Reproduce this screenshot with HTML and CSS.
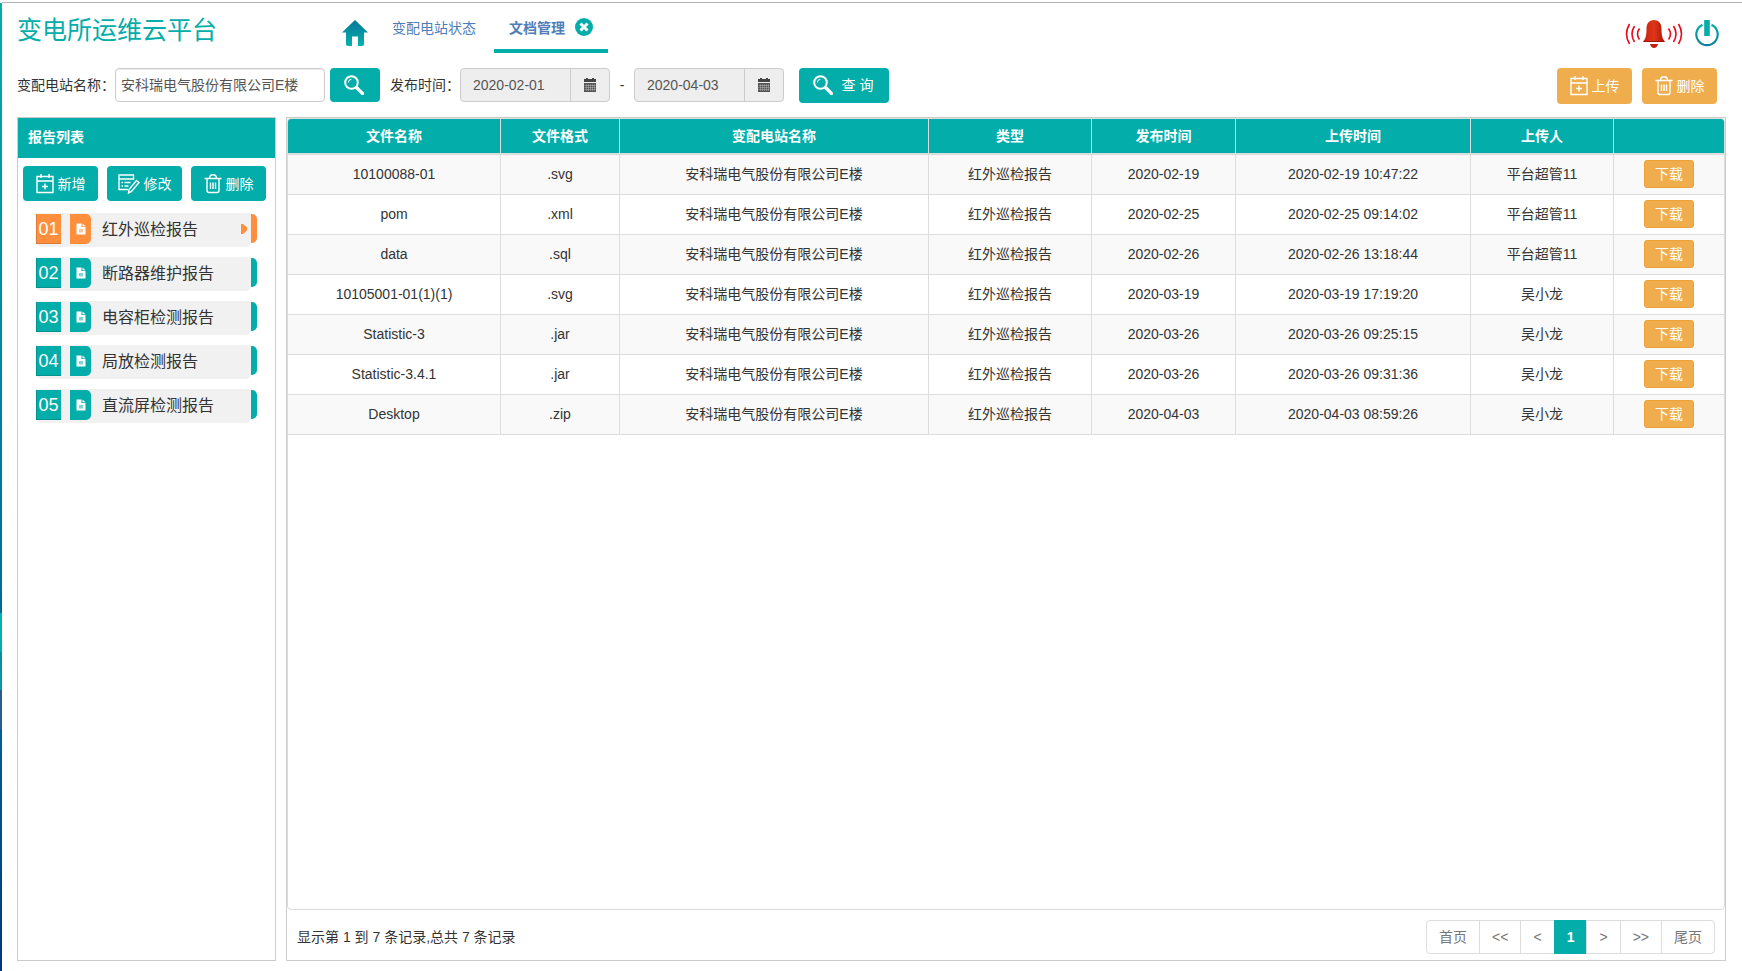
FILE: index.html
```html
<!DOCTYPE html>
<html lang="zh-CN">
<head>
  <meta charset="UTF-8">
  <meta name="viewport" content="width=device-width, initial-scale=1.0">
  <title>变电所运维云平台</title>
  <link rel="stylesheet" href="styles.css">
</head>
<body>
  <!-- 图标 -->
  <svg class="sprite" aria-hidden="true">
    <defs>
      <linearGradient id="grad-home" x1="0" y1="0" x2="0" y2="1">
        <stop offset="0" stop-color="#08759a"/>
        <stop offset="1" stop-color="#03b3ab"/>
      </linearGradient>
      <linearGradient id="grad-power" x1="0" y1="0" x2="0" y2="1">
        <stop offset="0" stop-color="#03adaa"/>
        <stop offset="1" stop-color="#0a7f9f"/>
      </linearGradient>
      <linearGradient id="grad-bell" x1="0" y1="0" x2="1" y2="0">
        <stop offset="0" stop-color="#c9200c"/>
        <stop offset="0.5" stop-color="#de3617"/>
        <stop offset="1" stop-color="#a81508"/>
      </linearGradient>
    </defs>
    <symbol id="i-search" viewBox="0 0 20 20">
      <circle cx="7.5" cy="7.5" r="6.3" fill="none" stroke="#fff" stroke-width="2"/>
      <path d="M4.4 7.5a3.2 3.2 0 0 1 3-3.2" fill="none" stroke="#fff" stroke-width="1"/>
      <path d="M12.5 12.5l6 6" stroke="#fff" stroke-width="3.2" stroke-linecap="round"/>
    </symbol>
    <symbol id="i-add" viewBox="0 0 18 20">
      <path d="M1 2.5h16v16H1zM1 7h16M5 0v4M13 0v4M9 9.5v6M6 12.5h6" fill="none" stroke="#fff" stroke-width="1.4"/>
    </symbol>
    <symbol id="i-edit" viewBox="0 0 22 20">
      <path d="M15.5 6V1H1v14.5h9M1 5h14.5M3.5 8.5H5M6.5 8.5h6M3.5 12H5M6.500 12h4" fill="none" stroke="#fff" stroke-width="1.4"/>
      <path d="M18.5 6.5l2.5 2-7.500 9-3 1.500.5-3.500z" fill="none" stroke="#fff" stroke-width="1.4"/>
    </symbol>
    <symbol id="i-trash" viewBox="0 0 18 20">
      <path d="M.5 4.5h17M5.500 4.500c0-5 7-5 7 0M3 4.500v12q0 2 2 2h8q2 0 2-2v-12M6.500 8.500v6.500M9 8.500v6.500M11.500 8.500v6.500" fill="none" stroke="#fff" stroke-width="1.4"/>
    </symbol>
    <symbol id="i-file" viewBox="0 0 10 12">
      <path d="M.5.5h5v3.500h4v7.500h-9z" fill="#fff"/>
      <path d="M6.500.5l3 2.800h-3z" fill="#fff"/>
      <path d="M3 6h4v3.500H3z" fill="currentColor" opacity="0.5"/>
    </symbol>
    <symbol id="i-calendar" viewBox="0 0 14 14">
      <path d="M1 1h2V0h2v1h4V0h2v1h2v3H1z" fill="#444"/>
      <path d="M1 5h12v9H1z" fill="#555"/>
      <path d="M1.500 7.500h11M1.500 9.500h11M1.500 11.500h11M3.500 6v7M5.500 6v7M7.500 6v7M9.500 6v7M11.500 6v7" stroke="#eee" stroke-width="0.3"/>
    </symbol>
  </svg>

  <div class="side-strip"></div>

  <div class="page">
    <!-- 顶部 -->
    <header class="top-bar">
      <h1 class="logo">变电所运维云平台</h1>
      <a class="home" href="#" aria-label="首页">
        <svg width="26" height="26" viewBox="0 0 26 26"><path d="M13 0L0 12.500h4V24q0 2 2 2h4v-9.500h6V26h4q2 0 2-2V12.500h4z" fill="url(#grad-home)"/></svg>
      </a>
      <nav class="tabs">
        <a class="tab" href="#">变配电站状态</a>
        <div class="tab active">
          <a href="#">文档管理</a>
          <button class="tab-close" aria-label="关闭">
            <svg width="18" height="18" viewBox="0 0 18 18"><circle cx="9" cy="9" r="9" fill="#03adaa"/><path d="M5.500 5.500l7 7M12.500 5.500l-7 7" stroke="#fff" stroke-width="3"/></svg>
          </button>
        </div>
      </nav>
      <div class="top-actions">
        <button class="icon-btn" aria-label="报警">
          <svg width="58" height="28" viewBox="0 0 58 28">
            <path d="M29 0c5 0 7.500 3.500 7.500 9 0 7 1 10 3.500 12.500H18c2.500-2.500 3.500-5.500 3.500-12.500 0-5.500 2.500-9 7.500-9z" fill="url(#grad-bell)"/>
            <path d="M18.500 21h21v1h-21z" fill="#a01207"/>
            <path d="M25 24h8q-1 4-4 4t-4-4z" fill="#c41f0f"/>
            <path d="M14.500 8.500q-4 5.500 0 11M9.500 6q-5 8 0 16M4.500 4q-6 10 0 20M43.500 8.500q4 5.500 0 11M48.500 6q5 8 0 16M53.500 4q6 10 0 20" fill="none" stroke="#e60a1c" stroke-width="1.600"/>
          </svg>
        </button>
        <button class="icon-btn" aria-label="退出">
          <svg width="24" height="27" viewBox="0 0 24 27"><path d="M7.500 4.800a10.700 10.700 0 1 0 9 0" fill="none" stroke="url(#grad-power)" stroke-width="2.200"/><path d="M9.200 0h5.600v16H9.200z" fill="#03adaa"/></svg>
        </button>
      </div>
    </header>

    <!-- 查询条件 -->
    <form class="filter-bar" onsubmit="return false">
      <label for="station">变配电站名称：</label>
      <input class="station" id="station" type="text" value="安科瑞电气股份有限公司E楼">
      <button class="btn btn-search" aria-label="搜索"><svg width="20" height="20"><use href="#i-search"/></svg></button>
      <label class="date-label" for="date-start">发布时间：</label>
      <div class="date-group">
        <input id="date-start" type="text" value="2020-02-01" readonly>
        <button class="addon" aria-label="选择开始日期"><svg width="14" height="14"><use href="#i-calendar"/></svg></button>
      </div>
      <span class="dash">-</span>
      <div class="date-group">
        <input id="date-end" type="text" value="2020-04-03" aria-label="结束日期" readonly>
        <button class="addon" aria-label="选择结束日期"><svg width="14" height="14"><use href="#i-calendar"/></svg></button>
      </div>
      <button class="btn btn-query"><svg width="20" height="20"><use href="#i-search"/></svg>查 询</button>
      <div class="filter-actions">
        <button class="btn btn-orange"><svg width="18" height="20"><use href="#i-add"/></svg>上传</button>
        <button class="btn btn-orange"><svg width="18" height="20"><use href="#i-trash"/></svg>删除</button>
      </div>
    </form>

    <main class="content">
      <!-- 报告列表 -->
      <aside class="report-panel">
        <h2>报告列表</h2>
        <div class="report-actions">
          <button class="btn"><svg width="18" height="20"><use href="#i-add"/></svg>新增</button>
          <button class="btn"><svg width="22" height="20"><use href="#i-edit"/></svg>修改</button>
          <button class="btn"><svg width="18" height="20"><use href="#i-trash"/></svg>删除</button>
        </div>
        <ul class="report-list">
          <li><a class="report active" href="#"><span class="num">01</span><span class="file"><svg width="10" height="12"><use href="#i-file"/></svg></span><span class="name">红外巡检报告</span></a></li>
          <li><a class="report" href="#"><span class="num">02</span><span class="file"><svg width="10" height="12"><use href="#i-file"/></svg></span><span class="name">断路器维护报告</span></a></li>
          <li><a class="report" href="#"><span class="num">03</span><span class="file"><svg width="10" height="12"><use href="#i-file"/></svg></span><span class="name">电容柜检测报告</span></a></li>
          <li><a class="report" href="#"><span class="num">04</span><span class="file"><svg width="10" height="12"><use href="#i-file"/></svg></span><span class="name">局放检测报告</span></a></li>
          <li><a class="report" href="#"><span class="num">05</span><span class="file"><svg width="10" height="12"><use href="#i-file"/></svg></span><span class="name">直流屏检测报告</span></a></li>
        </ul>
      </aside>

      <!-- 文件表格 -->
      <section class="table-panel">
        <div class="table-box">
          <table>
            <colgroup>
              <col class="c-name"><col class="c-ext"><col class="c-station"><col class="c-type">
              <col class="c-date"><col class="c-time"><col class="c-user"><col class="c-op">
            </colgroup>
            <thead>
              <tr><th>文件名称</th><th>文件格式</th><th>变配电站名称</th><th>类型</th><th>发布时间</th><th>上传时间</th><th>上传人</th><th></th></tr>
            </thead>
            <tbody>
              <tr><td>10100088-01</td><td>.svg</td><td>安科瑞电气股份有限公司E楼</td><td>红外巡检报告</td><td>2020-02-19</td><td>2020-02-19 10:47:22</td><td>平台超管11</td><td><button class="download">下载</button></td></tr>
              <tr><td>pom</td><td>.xml</td><td>安科瑞电气股份有限公司E楼</td><td>红外巡检报告</td><td>2020-02-25</td><td>2020-02-25 09:14:02</td><td>平台超管11</td><td><button class="download">下载</button></td></tr>
              <tr><td>data</td><td>.sql</td><td>安科瑞电气股份有限公司E楼</td><td>红外巡检报告</td><td>2020-02-26</td><td>2020-02-26 13:18:44</td><td>平台超管11</td><td><button class="download">下载</button></td></tr>
              <tr><td>10105001-01(1)(1)</td><td>.svg</td><td>安科瑞电气股份有限公司E楼</td><td>红外巡检报告</td><td>2020-03-19</td><td>2020-03-19 17:19:20</td><td>吴小龙</td><td><button class="download">下载</button></td></tr>
              <tr><td>Statistic-3</td><td>.jar</td><td>安科瑞电气股份有限公司E楼</td><td>红外巡检报告</td><td>2020-03-26</td><td>2020-03-26 09:25:15</td><td>吴小龙</td><td><button class="download">下载</button></td></tr>
              <tr><td>Statistic-3.4.1</td><td>.jar</td><td>安科瑞电气股份有限公司E楼</td><td>红外巡检报告</td><td>2020-03-26</td><td>2020-03-26 09:31:36</td><td>吴小龙</td><td><button class="download">下载</button></td></tr>
              <tr><td>Desktop</td><td>.zip</td><td>安科瑞电气股份有限公司E楼</td><td>红外巡检报告</td><td>2020-04-03</td><td>2020-04-03 08:59:26</td><td>吴小龙</td><td><button class="download">下载</button></td></tr>
            </tbody>
          </table>
        </div>
        <footer class="table-footer">
          <span>显示第 1 到 7 条记录,总共 7 条记录</span>
          <nav class="pagination">
            <a href="#">首页</a><a href="#">&lt;&lt;</a><a href="#">&lt;</a><a class="current" href="#">1</a><a href="#">&gt;</a><a href="#">&gt;&gt;</a><a href="#">尾页</a>
          </nav>
        </footer>
      </section>
    </main>
  </div>
</body>
</html>
```

FILE: styles.css
```css
* {
  box-sizing: border-box;
}

body {
  margin: 0;
  padding-top: 2px;
  height: 100vh;
  display: flex;
  font-family: "Liberation Sans", "Noto Sans CJK SC", sans-serif;
  font-size: 14px;
  line-height: 20px;
  color: #333;
  background: #fff;
}

a {
  color: inherit;
  text-decoration: none;
}

button,
input {
  font: inherit;
}

button {
  padding: 0;
  border: none;
  background: none;
  cursor: pointer;
}

svg {
  display: block;
  flex: none;
}

.sprite {
  position: absolute;
  width: 0;
  height: 0;
}

/* 左侧菜单边缘 */
.side-strip {
  width: 2px;
  margin-top: 1px;
  background: linear-gradient(#03adaa 0, #006b93 63%, #03b3ab 63%, #03adaa 67%, #0a8ba0 67%, #0a9aa3 71%, #2a5c8c 71%, #2a5c8c 75%, #005f92 75%, #00357f 100%);
}

.page {
  flex: 1;
  min-width: 0;
  display: flex;
  flex-direction: column;
  padding: 0 16px 10px 15px;
  border-top: 1px solid #b4b4b4;
}

/* 顶部 */
.top-bar {
  display: flex;
  align-items: flex-start;
  height: 50px;
}

.logo {
  width: 325px;
  margin: 0;
  padding-top: 9px;
  font-size: 25px;
  font-weight: 400;
  line-height: 36px;
  color: #03adaa;
}

.home {
  margin-top: 17px;
}

.tabs {
  display: flex;
  margin-left: 6px;
  color: #4f7db8;
}

.tab {
  display: flex;
  align-items: flex-start;
  gap: 10px;
  height: 50px;
  padding: 15px 18px 0;
}

.tab.active {
  padding: 15px 15px 0;
  border-bottom: 4px solid #03adaa;
  font-weight: bold;
}

.top-actions {
  display: flex;
  align-items: flex-start;
  gap: 12px;
  margin: 17px 7px 0 auto;
}

/* 查询条件 */
.filter-bar {
  display: flex;
  align-items: flex-start;
  margin: 15px 0 13px;
}

.filter-bar label {
  width: 98px;
  line-height: 34px;
  white-space: nowrap;
}

.filter-bar .date-label {
  width: 70px;
  margin-left: 10px;
}

.station {
  width: 210px;
  height: 34px;
  padding: 0 5px 2px;
  border: 1px solid #ccc;
  border-radius: 4px;
  box-shadow: inset 0 1px 1px rgba(0, 0, 0, 0.075);
  color: #555;
}

.btn {
  display: flex;
  align-items: center;
  justify-content: center;
  gap: 4px;
  width: 75px;
  height: 35px;
  border-radius: 4px;
  background: #03adaa;
  color: #fff;
}

.btn-search {
  width: 50px;
  height: 34px;
  margin-left: 5px;
  padding: 0 2px 1px 0;
}

.btn-query {
  gap: 9px;
  width: 90px;
  margin-left: 15px;
  padding: 0 2px 1px 0;
}

.btn-orange {
  height: 36px;
  background: #f0ad4e;
}

.date-group {
  display: flex;
  width: 150px;
  height: 34px;
  border: 1px solid #ccc;
  border-radius: 4px;
  background: #eee;
}

.date-group input {
  flex: 1;
  min-width: 0;
  padding: 0 12px;
  border: none;
  background: none;
  color: #555;
}

.addon {
  display: flex;
  align-items: center;
  justify-content: center;
  width: 39px;
  border-left: 1px solid #ccc;
}

.dash {
  width: 24px;
  line-height: 34px;
  text-align: center;
}

.filter-actions {
  display: flex;
  gap: 10px;
  margin: 0 9px 0 auto;
}

.content {
  flex: 1;
  display: flex;
  gap: 10px;
  min-height: 0;
}

/* 报告列表 */
.report-panel {
  width: 259px;
  border: 1px solid #ccc;
}

.report-panel h2 {
  margin: 0;
  padding: 0 10px 2px;
  font-size: 14px;
  line-height: 38px;
  color: #fff;
  background: #03adaa;
}

.report-actions {
  display: flex;
  gap: 9px;
  padding: 8px 5px 12px;
}

.report-list {
  margin: 0;
  padding: 0 18px;
  list-style: none;
}

.report {
  display: flex;
  position: relative;
  height: 34px;
  margin: 0 6px 10px 0;
  padding-top: 1px;
  border-radius: 0 0 5px 5px;
  background: #f1f1f1;
  font-size: 16px;
  line-height: 30px;
}

.num,
.file {
  height: 30px;
  background: #03adaa;
  color: #fff;
}

.num {
  width: 25px;
  box-shadow: inset 1px -1px rgba(0, 0, 0, 0.15);
  font-size: 18px;
  text-align: center;
}

.file {
  display: flex;
  align-items: center;
  justify-content: center;
  width: 21px;
  margin-left: 9px;
  border-radius: 0 5px 5px 0;
}

.file svg {
  color: #03adaa;
}

.name {
  margin-left: 11px;
  line-height: 32px;
}

/* 右侧彩色条 */
.report::after {
  content: "";
  position: absolute;
  top: 1px;
  right: -6px;
  width: 6px;
  height: 29px;
  border-radius: 0 5px 5px 0;
  background: #03adaa;
}

.report.active .num,
.report.active .file,
.report.active::after {
  background: #ff8f3c;
}

.report.active .file svg {
  color: #ff8f3c;
}

/* 选中箭头 */
.report.active::before {
  content: "";
  position: absolute;
  top: 11px;
  right: 4px;
  width: 6px;
  height: 10px;
  background: #ff8f3c;
  clip-path: polygon(0 0, 35% 0, 100% 35%, 100% 65%, 35% 100%, 0 100%);
}

/* 文件表格 */
.table-panel {
  flex: 1;
  min-width: 0;
  display: flex;
  flex-direction: column;
  border: 1px solid #ccc;
}

.table-box {
  flex: 1;
  border: 1px solid #ddd;
  border-radius: 4px;
  overflow: hidden;
}

table {
  width: 100%;
  table-layout: fixed;
  border-collapse: separate;
  border-spacing: 0;
}

.c-name { width: 213px; }
.c-ext { width: 119px; }
.c-station { width: 309px; }
.c-type { width: 163px; }
.c-date { width: 144px; }
.c-time { width: 235px; }
.c-user { width: 143px; }
.c-op { width: 110px; }

th,
td {
  padding: 0;
  text-align: center;
  border-right: 1px solid #ddd;
}

th:last-child,
td:last-child {
  border-right: none;
}

th {
  height: 36px;
  border-bottom: 2px solid #ddd;
  color: #fff;
  background: #03adaa;
}

td {
  height: 40px;
  padding-bottom: 2px;
  border-bottom: 1px solid #ddd;
}

tbody tr:nth-child(odd) {
  background: #f9f9f9;
}

.download {
  display: block;
  width: 50px;
  height: 28px;
  margin: 0 auto;
  border: 1px solid #eea236;
  border-radius: 3px;
  background: #f0ad4e;
  color: #fff;
}

.table-footer {
  display: flex;
  align-items: center;
  justify-content: space-between;
  height: 50px;
  padding: 3px 10px 0;
}

.pagination {
  display: flex;
  border: 1px solid #ddd;
  border-radius: 4px;
  color: #777;
}

.pagination a {
  padding: 6px 12px;
  border-left: 1px solid #ddd;
}

.pagination a:first-child {
  border-left: none;
}

.pagination .current {
  margin: -1px 0;
  padding: 7px 12px;
  border-color: #03adaa;
  background: #03adaa;
  color: #fff;
  font-weight: bold;
}
```
